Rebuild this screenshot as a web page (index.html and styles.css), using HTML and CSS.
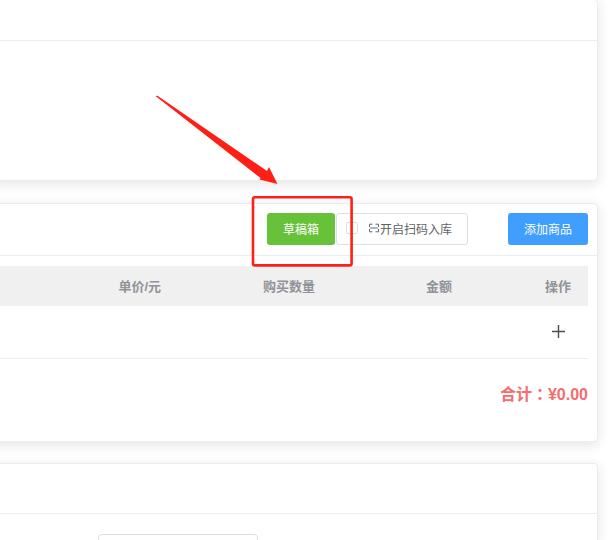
FILE: index.html
```html
<!DOCTYPE html>
<html lang="zh">
<head>
<meta charset="utf-8">
<title>商品入库</title>
<link rel="stylesheet" href="styles.css">
</head>
<body>
<main class="page">
  <section class="card card-top">
    <div class="card-top-head"></div>
  </section>
  <section class="card card-goods">
    <header class="goods-head">
      <button class="btn btn-green">草稿箱</button>
      <label class="btn btn-scan">
        <span class="check"></span>
        <svg class="scan-icon" viewBox="0 0 10 10" width="10" height="10" aria-hidden="true">
          <path d="M.5 4V1.200h3M6.500 1.200h3V4M.5 6v2.800h3M6.500 8.800h3V6M1 5h8" fill="none" stroke="#5f6b7a" stroke-width="1"/>
        </svg>
        <span>开启扫码入库</span>
      </label>
      <button class="btn btn-blue">添加商品</button>
    </header>
    <div class="table">
      <div class="table-head">
        <span>单价/元</span>
        <span>购买数量</span>
        <span>金额</span>
        <span>操作</span>
      </div>
      <div class="table-row">
        <svg class="plus" viewBox="0 0 13 13" width="13" height="13" aria-hidden="true">
          <path d="M0 6.500h13M6.500 0v13" stroke="#4d4d4d" stroke-width="1.400" fill="none"/>
        </svg>
      </div>
    </div>
    <div class="total" lang="zh-Hant">合计：¥0.00</div>
  </section>
  <section class="card card-bottom">
    <div class="card-bottom-head"></div>
    <div class="card-bottom-body"><div class="input"></div></div>
  </section>
</main>
<svg class="annotation" viewBox="0 0 612 540" width="612" height="540" aria-hidden="true">
  <path d="M155.500 96 L157.500 95.800 L267 171 L269 167 L277.500 184 L259.500 179.500 L260.500 178 Z" fill="#fe2016"/>
  <rect x="253" y="197.200" width="98.600" height="68.200" rx="2" fill="none" stroke="#fe2016" stroke-width="2.600"/>
</svg>
</body>
</html>
```
FILE: styles.css
```css
* { box-sizing: border-box; }
html, body { margin: 0; height: 540px; overflow: hidden; background: #fff; }
body { position: relative; font-family: "Liberation Sans", "Noto Sans CJK SC", sans-serif; }
.page { display: flex; flex-direction: column; gap: 21px; margin-left: -10px; width: 608px; }
.card {
  background: #fff;
  border: 1px solid #ebebf3;
  border-radius: 4px;
  box-shadow: 0 3px 13px rgba(0, 0, 0, .11);
  flex: none;
}
.card-top { height: 182px; margin-top: -1px; }
.card-top-head { height: 41px; border-bottom: 1px solid #ebebf3; }
.card-goods { height: 239px; margin-top: 1px; }
.goods-head {
  height: 52px;
  border-bottom: 1px solid #ebebf3;
  display: flex;
  align-items: flex-start;
  padding: 9px 9px 0 276px;
}
.btn {
  height: 32px;
  border-radius: 3px;
  border: 1px solid transparent;
  font: 12px "Liberation Sans", "Noto Sans CJK SC", sans-serif;
  color: #fff;
  padding: 0 0 2px;
  display: flex;
  align-items: center;
  justify-content: center;
}
.btn-green { width: 68px; background: #67c23a; }
.btn-blue { width: 80px; background: #409eff; margin-left: 40px; }
.btn-scan {
  width: 132px;
  margin-left: 1px;
  background: #fff;
  border-color: #dcdfe6;
  color: #606266;
  justify-content: flex-start;
  padding-left: 9px;
}
.check {
  width: 12px;
  height: 12px;
  border: 1px solid #dcdfe6;
  border-radius: 2px;
  margin-right: 11px;
}
.scan-icon { margin-right: 1px; }
.table { padding: 10px 9px 0 0; }
.table-head {
  height: 40px;
  background: #f0f0f0;
  display: grid;
  grid-template-columns: 1fr 154px 137px 119px;
  padding: 0 17px 2px 0;
  align-items: center;
  text-align: right;
  font-size: 13px;
  font-weight: 700;
  color: #909399;
}
.table-row {
  height: 53px;
  border-bottom: 1px solid #ebebf3;
  display: flex;
  justify-content: flex-end;
  padding: 19px 23px 0 0;
}
.total {
  padding: 26px 9px 0 0;
  text-align: right;
  font-family: "Liberation Sans", "Noto Sans CJK TC", sans-serif;
  font-size: 16px;
  line-height: 19px;
  font-weight: 700;
  color: #f56c6c;
}
.card-bottom { height: 77px; border-bottom: 0; overflow: hidden; border-radius: 4px 4px 0 0; }
.card-bottom-head { height: 50px; border-bottom: 1px solid #ebebf3; }
.card-bottom-body { padding: 20px 0 0 107px; }
.input {
  width: 160px;
  height: 32px;
  border: 1px solid #dcdfe6;
  border-radius: 4px;
}
.annotation { position: absolute; left: 0; top: 0; pointer-events: none; }
```
